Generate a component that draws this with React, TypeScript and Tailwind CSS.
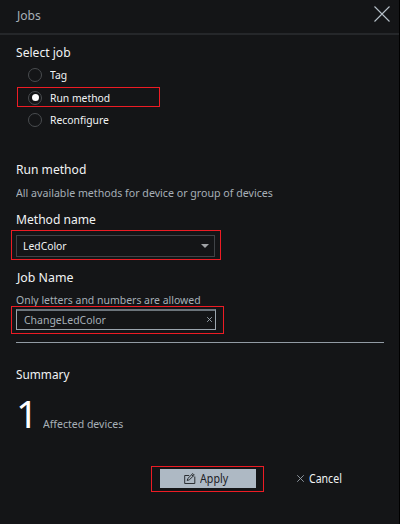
function Radio({ label, checked = false, className = "" }: { label: string; checked?: boolean; className?: string }) {
  return (
    <label className={`relative flex h-[22px] items-center pl-3 ${className}`}>
      <span className="-mt-px flex size-3.5 items-center justify-center rounded-full border border-[#494c4f]">
        {checked && <span className="size-[7px] rounded-full bg-white" />}
      </span>
      <span className="ml-2 origin-left scale-x-[.9] text-[11.5px] leading-[18px] text-[#f1f3f4]">{label}</span>
      {checked && <Highlight className="top-0 left-px h-[20px] w-[143px]" />}
    </label>
  );
}

function Highlight({ className }: { className: string }) {
  return <span className={`pointer-events-none absolute border border-[#ed1c24] ${className}`} />;
}

function Cross({ className, width }: { className: string; width: number }) {
  return (
    <svg viewBox="0 0 16 16" className={className} fill="none" stroke="currentColor" strokeWidth={width}>
      <path d="M.5.5l15 15M15.5.5l-15 15" />
    </svg>
  );
}

export default function App() {
  return (
    <div className="flex h-[524px] w-[401px] overflow-hidden bg-white font-['Noto_Sans','Open_Sans',sans-serif] whitespace-nowrap">
      <main className="flex w-[400px] flex-col border-r border-black bg-[#141517] text-[#f1f3f4]">
        <header className="flex h-[35px] items-start justify-between border-b-2 border-[#25272a] pr-[9px] pl-[17px]">
          <span className="origin-left scale-x-[.93] pt-[6px] text-[13px] leading-[18px] text-[#a7b0b8]">Jobs</span>
          <Cross width={1.1} className="mt-[6px] size-4 text-[#b6c0c9]" />
        </header>

        <section className="flex h-[125px] flex-col px-4 pt-[8px]">
          <h2 className="h-[21px] origin-left scale-x-[.93] text-[13px] leading-[18px]">Select job</h2>
          <Radio label="Tag" />
          <Radio label="Run method" checked className="mt-px" />
          <Radio label="Reconfigure" />
        </section>

        <section className="flex flex-col px-4">
          <h2 className="h-[24px] origin-left scale-x-[.93] text-[13px] leading-[18px]">Run method</h2>
          <p className="h-[26px] origin-left scale-x-[.925] text-[11.5px] leading-[18px] text-[#a7b0b8]">All available methods for device or group of devices</p>
          <h3 className="h-[25px] origin-left scale-x-[.93] text-[13px] leading-[18px]">Method name</h3>
          <div className="relative flex h-[22px] w-[199px] items-center justify-between border border-[#404347] pr-[5px] pl-[6px]">
            <span className="origin-left scale-x-[.9] text-[11.5px] leading-[18px]">LedColor</span>
            <svg viewBox="0 0 8 4" className="h-1 w-2 text-[#a0a3a6]" fill="currentColor"><path d="M0 0h8L4 4z" /></svg>
            <Highlight className="-top-[6px] -left-[6px] h-[30px] w-[210px]" />
          </div>
          <h3 className="mt-[11px] h-[23px] origin-left scale-x-[.95] pl-px text-[13px] leading-[18px]">Job Name</h3>
          <p className="h-[18px] origin-left scale-x-[.91] text-[11.5px] leading-[18px] text-[#a7b0b8]">Only letters and numbers are allowed</p>
          <div className="relative flex h-[21px] w-[200px] items-center justify-between border border-t-2 border-[#9ba5ae] border-t-[#6c747b] pr-[3px] pl-[7px]">
            <span className="origin-left scale-x-[.91] text-[11.5px] leading-[18px] text-[#a7b0b8]">ChangeLedColor</span>
            <Cross width={3} className="mb-[2px] size-[5px] text-[#9ba5ae]" />
            <Highlight className="-top-[5px] -left-[6px] h-[28px] w-[213px]" />
          </div>
        </section>

        <hr className="mx-4 mt-[12px] w-[368px] border-t border-[#929ba4]" />

        <section className="px-4 pt-[22px]">
          <h2 className="h-[18px] origin-left scale-x-[.91] text-[13px] leading-[18px]">Summary</h2>
          <div className="mt-[6px] flex h-[48px] items-baseline">
            <span className="w-[27px] text-[39px] leading-[48px] text-white">1</span>
            <span className="origin-left scale-x-[.915] text-[11.5px] leading-[18px] text-[#a7b0b8]">Affected devices</span>
          </div>
        </section>

        <footer className="mt-[32px] flex pl-[160px]">
          <button className="relative flex h-[19px] w-24 items-center bg-[#aeb9c4] pl-6 text-[#1d2024]">
            <svg viewBox="0 0 12 11" className="h-[11px] w-3" fill="none" stroke="currentColor" strokeWidth=".9">
              <path d="M5.2 2.5H.7v8h10.1v-7M3.2 7.5l.6-2L8.8.6l1.5 1.5-5 4.7zM7.7 1.7l1.5 1.5" />
            </svg>
            <span className="ml-1 origin-left scale-x-[.89] text-[12px] leading-[18px]">Apply</span>
            <Highlight className="-top-[3px] -left-[9px] h-[26px] w-[113px]" />
          </button>
          <button className="ml-[41px] flex h-[19px] items-center">
            <Cross width={2} className="size-[7px] text-[#9ba5ae]" />
            <span className="ml-[5px] origin-left scale-x-[.88] text-[12px] leading-[18px]">Cancel</span>
          </button>
        </footer>
      </main>
    </div>
  );
}
